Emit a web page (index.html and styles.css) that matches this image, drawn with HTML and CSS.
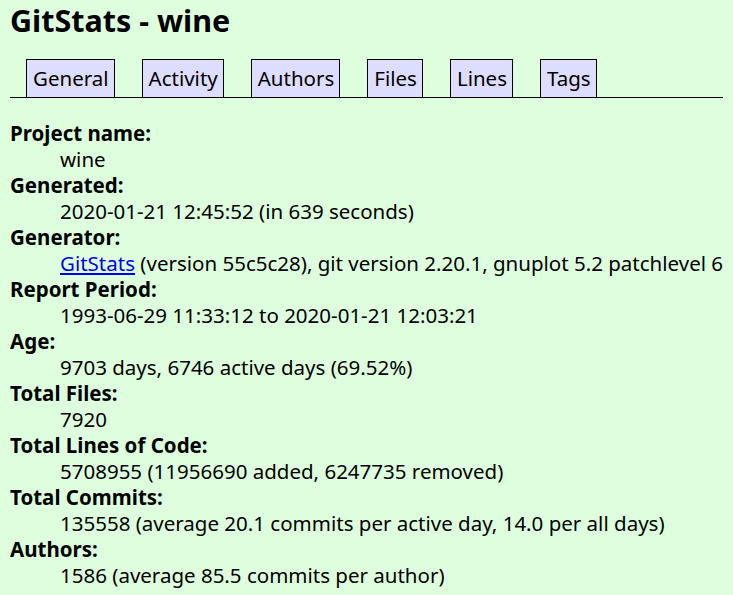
FILE: index.html
```html
<!DOCTYPE html>
<html>
<head>
    <meta charset="UTF-8">
    <title>GitStats - wine</title>
    <link rel="stylesheet" href="styles.css">
</head>
<body>
<h1>GitStats - wine</h1>

<div class="nav">
    <ul>
        <li><a href="index.html">General</a></li>
        <li><a href="activity.html">Activity</a></li>
        <li><a href="authors.html">Authors</a></li>
        <li><a href="files.html">Files</a></li>
        <li><a href="lines.html">Lines</a></li>
        <li><a href="tags.html">Tags</a></li>
    </ul>
</div>

<dl>
    <dt>Project name</dt><dd>wine</dd>
    <dt>Generated</dt><dd>2020-01-21 12:45:52 (in 639 seconds)</dd>
    <dt>Generator</dt><dd><a href="http://gitstats.sourceforge.net/">GitStats</a> (version 55c5c28), git version 2.20.1, gnuplot 5.2 patchlevel 6</dd>
    <dt>Report Period</dt><dd>1993-06-29 11:33:12 to 2020-01-21 12:03:21</dd>
    <dt>Age</dt><dd>9703 days, 6746 active days (69.52%)</dd>
    <dt>Total Files</dt><dd>7920</dd>
    <dt>Total Lines of Code</dt><dd>5708955 (11956690 added, 6247735 removed)</dd>
    <dt>Total Commits</dt><dd>135558 (average 20.1 commits per active day, 14.0 per all days)</dd>
    <dt>Authors</dt><dd>1586 (average 85.5 commits per author)</dd>
</dl>
</body>
</html>
```

FILE: styles.css
```css
body {
    margin: 0 10px;
    color: black;
    background-color: #dfd;
    font-family: "Noto Sans", "Noto Sans CJK SC", sans-serif;
    font-size: 20.5px;
    line-height: 26px;
}

h1 {
    margin: 0;
    font-size: 30.5px;
    line-height: 40px;
    font-weight: bold;
}

a {
    color: #0000ee;
}

.nav {
    margin-top: 19px;
    border-bottom: 1px solid black;
}

.nav ul {
    display: flex;
    gap: 27px;
    list-style: none;
    margin: 0;
    padding: 0 0 0 16px;
}

.nav li a {
    display: block;
    padding: 5px 5px 6px 6px;
    background-color: #ddf;
    border: 1px solid black;
    border-bottom: none;
    color: black;
    text-decoration: none;
}

dl {
    margin: 22px 0 0 0;
}

dt {
    font-weight: bold;
}

dt:after {
    content: ':';
}

dd {
    margin-left: 50px;
    white-space: nowrap;
}
```
